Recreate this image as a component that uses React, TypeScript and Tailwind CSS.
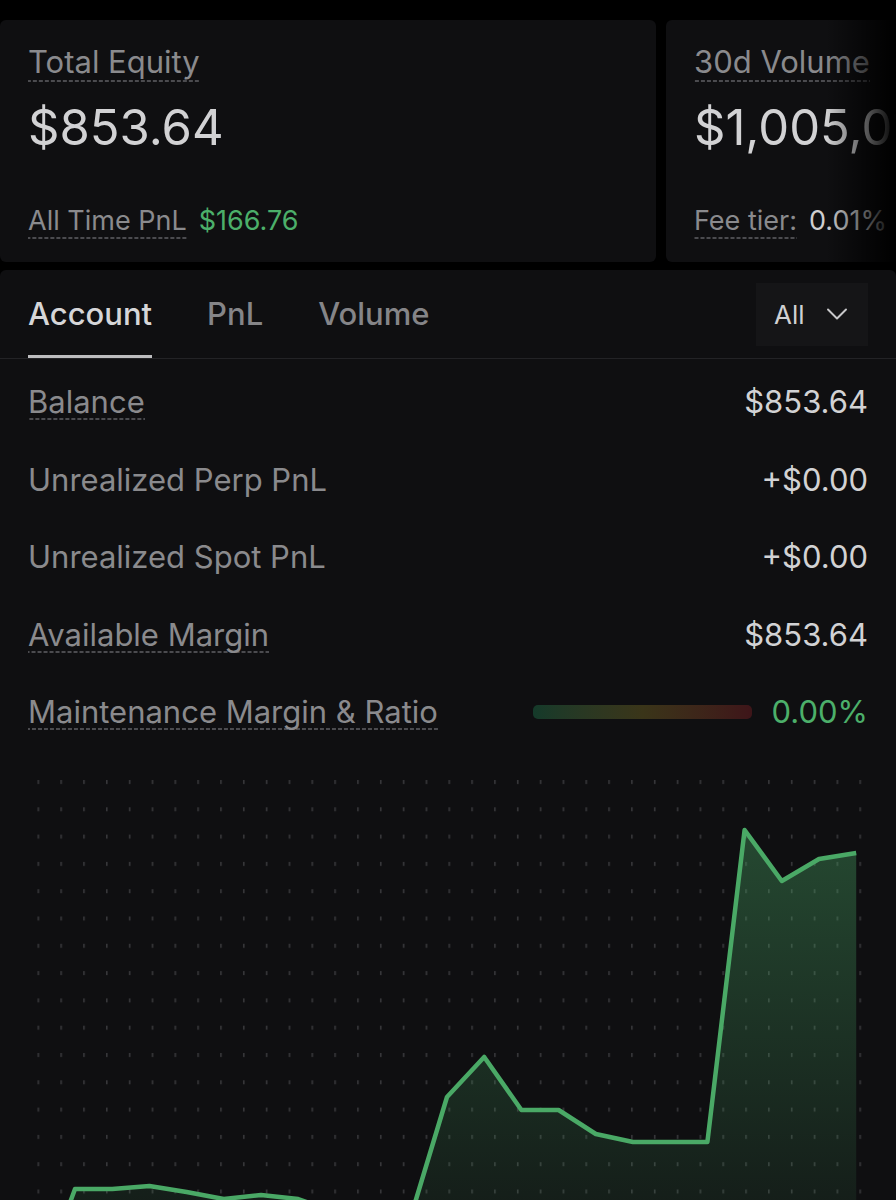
import { ChevronDown } from 'lucide-react';

const dashed =
  'bg-[linear-gradient(to_right,#4b4b4f_4px,transparent_4px)] bg-[length:6px_2px] bg-repeat-x bg-bottom';

const rows = [
  { label: 'Balance', value: '$853.64', tip: true },
  { label: 'Unrealized Perp PnL', value: '+$0.00', tip: false },
  { label: 'Unrealized Spot PnL', value: '+$0.00', tip: false },
  { label: 'Available Margin', value: '$853.64', tip: true },
];

// equity points, page y coordinates
const pts = [
  1290, 1189, 1189, 1186, 1192, 1199, 1195, 1199, 1212, 1226, 1220, 1097, 1057, 1110, 1110, 1134, 1142, 1142, 1142,
  830, 881, 859, 853,
];
const CHART_TOP = 751;

function EquityChart() {
  const xs = pts.map((_, i) => 75 + (i - 1) * 37.2);
  const ys = pts.map(y => y - CHART_TOP);
  const line = xs.map((x, i) => `${i ? 'L' : 'M'}${x.toFixed(1)},${ys[i]}`).join(' ');
  const last = xs[xs.length - 1];
  const area = `${line} L${last.toFixed(1)},600 L${xs[0].toFixed(1)},600 Z`;
  return (
    <svg width="896" height="600" viewBox="0 0 896 600" className="block">
      <defs>
        <pattern id="dots" x="37.5" y={780 - CHART_TOP} width="22.83" height="27.3" patternUnits="userSpaceOnUse">
          <rect x="0" y="0" width="1.6" height="4" fill="#37373a" />
        </pattern>
        <linearGradient id="fill" x1="0" y1={830 - CHART_TOP} x2="0" y2={1250 - CHART_TOP} gradientUnits="userSpaceOnUse">
          <stop offset="0" stopColor="#4caf6a" stopOpacity="0.36" />
          <stop offset="1" stopColor="#4caf6a" stopOpacity="0.06" />
        </linearGradient>
      </defs>
      <rect x="30" y="20" width="836" height="580" fill="url(#dots)" />
      <path d={area} fill="url(#fill)" />
      <path d={line} fill="none" stroke="#4aa966" strokeWidth="4.5" strokeLinejoin="round" />
    </svg>
  );
}

function StatCard({ w, label, value, subLabel, subValue, subColor }: {
  w: string; label: string; value: string; subLabel: string; subValue: string; subColor: string;
}) {
  return (
    <div className={`${w} h-[242px] shrink-0 rounded-md bg-[#0f0f11] pl-7 pt-[26px] flex flex-col`}>
      <span className={`self-start text-[31px] leading-none text-[#8a8a8d] pb-[5px] ${dashed}`}>{label}</span>
      <span className="mt-[21px] text-[49px] leading-none text-[#d2d2d4] whitespace-nowrap">{value}</span>
      <div className="mt-auto mb-[23px] flex items-baseline gap-3">
        <span className={`text-[27px] leading-none text-[#8a8a8d] pb-[5px] ${dashed}`}>{subLabel}</span>
        <span className={`text-[27px] leading-none ${subColor}`}>{subValue}</span>
      </div>
    </div>
  );
}

export default function App() {
  return (
    <div className="w-[896px] min-h-[1200px] bg-black pt-5 font-['Inter',sans-serif] overflow-hidden">
      {/* summary cards */}
      <div className="relative">
        <div className="flex gap-[10px] overflow-hidden">
          <StatCard w="w-[656px]" label="Total Equity" value="$853.64" subLabel="All Time PnL" subValue="$166.76" subColor="text-[#4caf6a]" />
          <StatCard w="w-[420px]" label="30d Volume" value="$1,005,012.58" subLabel="Fee tier:" subValue="0.01%" subColor="text-[#cfcfd1]" />
        </div>
        <div className="pointer-events-none absolute right-0 top-0 h-full w-[70px] bg-gradient-to-r from-transparent to-black" />
      </div>

      {/* account panel */}
      <div className="mt-2 rounded-t-md bg-[#0f0f11]">
        <div className="h-[89px] flex items-stretch justify-between border-b border-[#232326] pl-7 pr-7">
          <div className="flex gap-[55px]">
            <button className="relative flex items-center text-[31px] font-medium text-[#d6d6d8]">
              Account
              <span className="absolute left-0 right-0 bottom-0 h-[3px] bg-[#bdbdbf]" />
            </button>
            <button className="flex items-center text-[31px] font-medium text-[#858588]">PnL</button>
            <button className="flex items-center text-[31px] font-medium text-[#858588]">Volume</button>
          </div>
          <div className="flex items-center">
            <div className="w-[112px] h-[63px] bg-[#151517] flex items-center pl-[18px] gap-[14px]">
              <span className="text-[26px] text-[#d0d0d2]">All</span>
              <ChevronDown className="w-9 h-9 text-[#c8c8ca]" strokeWidth={1.3} />
            </div>
          </div>
        </div>

        <div className="pt-1 px-7">
          {rows.map(r => (
            <div key={r.label} className="h-[77.5px] flex items-center justify-between">
              <span className={`text-[31px] leading-none text-[#8a8a8d] ${r.tip ? `pb-[3px] -mb-[3px] ${dashed}` : ''}`}>{r.label}</span>
              <span className="text-[31px] leading-none text-[#d2d2d4]">{r.value}</span>
            </div>
          ))}
          <div className="h-[77.5px] flex items-center justify-between">
            <span className={`text-[31px] leading-none text-[#8a8a8d] pb-[3px] -mb-[3px] ${dashed}`}>Maintenance Margin &amp; Ratio</span>
            <div className="flex items-center gap-5">
              <div className="w-[219px] h-[14px] rounded-[5px] bg-gradient-to-r from-[#143a2a] via-[#3a3519] to-[#3e1519]" />
              <span className="text-[31px] leading-none text-[#4caf6a]">0.00%</span>
            </div>
          </div>
        </div>

        <EquityChart />
      </div>
    </div>
  );
}
